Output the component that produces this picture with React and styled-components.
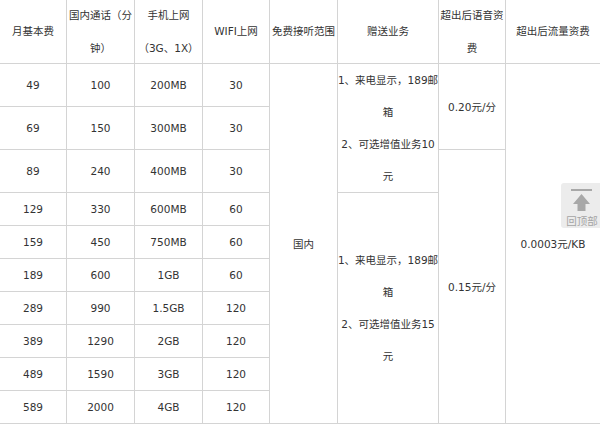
import React from "react";
import styled, { createGlobalStyle } from "styled-components";

const Global = createGlobalStyle`
  html, body { margin: 0; padding: 0; background: #fff; }
  body {
    width: 600px;
    height: 424px;
    overflow: hidden;
    font-family: "DejaVu Sans", "Noto Sans CJK SC", sans-serif;
  }
`;

const Page = styled.div`
  position: relative;
  width: 600px;
  height: 424px;
  overflow: hidden;
`;

const Table = styled.div`
  display: grid;
  grid-template-columns: 67px 68px 68px 67px 68px 101px 67px 94px;
  grid-template-rows: 64px repeat(3, 43px) repeat(7, 33px);
  width: 600px;
  color: #333;
  font-size: 10.5px;
`;

const Cell = styled.div`
  box-sizing: border-box;
  grid-column: ${(p) => p.$col};
  grid-row: ${(p) => p.$row} / span ${(p) => p.$span || 1};
  border-bottom: 1px solid #d4d4d4;
  border-right: ${(p) => (p.$last ? "none" : "1px solid #d4d4d4")};
  display: flex;
  flex-direction: column;
  align-items: center;
  justify-content: center;
  text-align: center;
  overflow: visible;
  line-height: ${(p) => (p.$lh ? `${p.$lh}px` : "normal")};
`;

const Line = styled.span`
  display: block;
  white-space: nowrap;
`;

const BackTop = styled.div`
  position: absolute;
  left: 561px;
  top: 183px;
  width: 39px;
  height: 45px;
  background: #ececec;
  border-radius: 3px 0 0 3px;
  display: flex;
  flex-direction: column;
  align-items: center;
  padding-top: 6px;
  box-sizing: border-box;
`;

const BackText = styled.span`
  font-family: "Noto Sans CJK SC", sans-serif;
  font-size: 10.5px;
  line-height: 12px;
  color: #a4a4a4;
  white-space: nowrap;
  margin-top: 3px;
  margin-left: 3px;
`;

const headers = [
  ["月基本费"],
  ["国内通话（分", "钟）"],
  ["手机上网", "（3G、1X）"],
  ["WIFI上网"],
  ["免费接听范围"],
  ["赠送业务"],
  ["超出后语音资", "费"],
  ["超出后流量资费"],
];

const rows = [
  ["49", "100", "200MB", "30"],
  ["69", "150", "300MB", "30"],
  ["89", "240", "400MB", "30"],
  ["129", "330", "600MB", "60"],
  ["159", "450", "750MB", "60"],
  ["189", "600", "1GB", "60"],
  ["289", "990", "1.5GB", "120"],
  ["389", "1290", "2GB", "120"],
  ["489", "1590", "3GB", "120"],
  ["589", "2000", "4GB", "120"],
];

const gift = (n) => ["1、来电显示，189邮", "箱", `2、可选增值业务${n}`, "元"];

export default function App() {
  return (
    <Page>
      <Global />
      <Table>
        {headers.map((h, i) => (
          <Cell key={`h${i}`} $col={i + 1} $row={1} $lh={33} $last={i === 7}>
            {h.map((l, j) => (
              <Line key={j}>{l}</Line>
            ))}
          </Cell>
        ))}
        {rows.map((r, ri) =>
          r.map((v, ci) => (
            <Cell key={`r${ri}c${ci}`} $col={ci + 1} $row={ri + 2}>
              {v}
            </Cell>
          ))
        )}
        <Cell $col={5} $row={2} $span={10}>
          国内
        </Cell>
        <Cell $col={6} $row={2} $span={3} $lh={32}>
          {gift(10).map((l, j) => (
            <Line key={j}>{l}</Line>
          ))}
        </Cell>
        <Cell $col={6} $row={5} $span={7} $lh={32}>
          {gift(15).map((l, j) => (
            <Line key={j}>{l}</Line>
          ))}
        </Cell>
        <Cell $col={7} $row={2} $span={2}>
          0.20元/分
        </Cell>
        <Cell $col={7} $row={4} $span={8}>
          0.15元/分
        </Cell>
        <Cell $col={8} $row={2} $span={10} $last>
          0.0003元/KB
        </Cell>
      </Table>
      <BackTop>
        <svg width="24" height="23" viewBox="0 0 24 23">
          <rect x="2" y="0" width="21" height="2" fill="#a8a8a8" />
          <path d="M12.5 5 L21 15 L16.5 15 L16.5 22 L8.5 22 L8.5 15 L4 15 Z" fill="#a8a8a8" />
        </svg>
        <BackText>回顶部</BackText>
      </BackTop>
    </Page>
  );
}
